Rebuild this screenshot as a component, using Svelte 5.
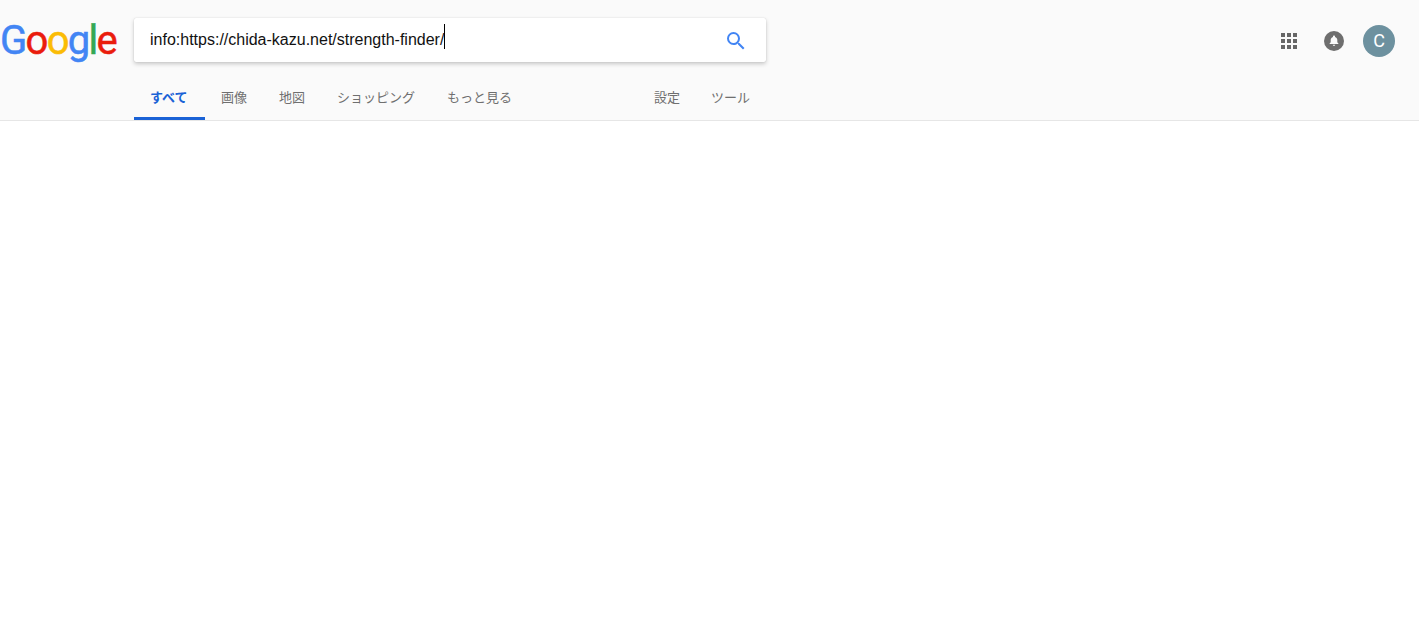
<script>
  const logo = [['G', '#4285f4'], ['o', '#ea1c0c'], ['o', '#fbbc05'], ['g', '#4285f4'], ['l', '#34a853'], ['e', '#ea1c0c']];
  const left = ['画像', '地図', 'ショッピング', 'もっと見る'];
  const right = ['設定', 'ツール'];
  const cells = Array.from({ length: 9 });
</script>

<div class="page">
  <header class="header">
    <div class="top">
      <div class="logo" aria-label="Google">
        {#each logo as [ch, color]}
          <span style="color:{color}">{ch}</span>
        {/each}
      </div>
      <div class="search">
        <div class="query">info:https://chida-kazu.net/strength-finder/<i class="caret"></i></div>
        <svg class="mag" width="24" height="24" viewBox="0 0 24 24">
          <path fill="#4285f4" d="M15.5 14h-.79l-.28-.27A6.47 6.47 0 0 0 16 9.5 6.5 6.5 0 1 0 9.5 16c1.61 0 3.09-.59 4.23-1.57l.27.28v.79l5 4.99L20.49 19l-4.99-5zm-6 0C7.01 14 5 11.99 5 9.5S7.01 5 9.5 5 14 7.01 14 9.5 11.99 14 9.5 14z"/>
        </svg>
      </div>
      <div class="tools">
        <div class="apps">
          {#each cells as _}<b></b>{/each}
        </div>
        <svg class="bell" width="20" height="20" viewBox="0 0 20 20">
          <circle cx="10" cy="10" r="10" fill="#6e6e6e"/>
          <path fill="#fafafa" d="M10 4.6c-.6 0-1 .4-1 1v.3C7.5 6.3 6.7 7.5 6.7 9v2.3l-1.1 1.2v.6h8.8v-.6l-1.1-1.2V9c0-1.5-.8-2.7-2.3-3.1v-.3c0-.6-.4-1-1-1zM8.8 13.8c0 .7.5 1.2 1.2 1.2s1.2-.5 1.2-1.2H8.8z"/>
        </svg>
        <div class="avatar">C</div>
      </div>
    </div>
    <nav class="tabs">
      <div class="group">
        <span class="tab active">すべて</span>
        {#each left as t}<span class="tab">{t}</span>{/each}
      </div>
      <div class="group settings">
        {#each right as t}<span class="tab">{t}</span>{/each}
      </div>
    </nav>
  </header>
</div>

<style>
  :global(body) {
    margin: 0;
    background: #fff;
  }
  .page {
    height: 633px;
    overflow: hidden;
    font-family: "Liberation Sans", "Noto Sans CJK JP", sans-serif;
  }
  .header {
    height: 120px;
    background: #fafafa;
    border-bottom: 1px solid #e6e6e6;
  }
  .top {
    display: flex;
    align-items: flex-start;
    height: 73px;
    padding-top: 18px;
    box-sizing: border-box;
  }
  .logo {
    width: 134px;
    flex: none;
    height: 44px;
    padding-top: 2px;
    font-family: Roboto, sans-serif;
    font-size: 40px;
    line-height: 41px;
    letter-spacing: -1.7px;
    font-weight: 400;
    -webkit-text-stroke: 0.5px currentColor;
    white-space: nowrap;
    box-sizing: border-box;
  }
  .search {
    width: 632px;
    height: 44px;
    flex: none;
    background: #fff;
    border-radius: 2px;
    box-shadow: 0 2px 4px rgba(0, 0, 0, 0.2), 0 0 1px rgba(0, 0, 0, 0.2);
    display: flex;
    align-items: center;
    justify-content: space-between;
    padding: 0 18px 0 16px;
    box-sizing: border-box;
  }
  .query {
    font-size: 16px;
    color: #111;
    line-height: 24px;
    display: flex;
    align-items: center;
    white-space: nowrap;
  }
  .caret {
    display: block;
    width: 1px;
    height: 25px;
    background: #000;
    margin-top: -7px;
  }
  .mag {
    flex: none;
    margin-top: 1px;
  }
  .tools {
    margin-left: auto;
    display: flex;
    align-items: center;
    padding-right: 24px;
    height: 46px;
  }
  .apps {
    display: grid;
    grid-template-columns: repeat(3, 4px);
    grid-auto-rows: 4px;
    gap: 2px;
    margin-right: 27px;
  }
  .apps b {
    background: #666;
    display: block;
  }
  .bell {
    margin-right: 19px;
  }
  .avatar {
    width: 32px;
    height: 32px;
    border-radius: 50%;
    background: #6d919f;
    color: #fff;
    font-family: Roboto, sans-serif;
    font-size: 18px;
    line-height: 32px;
    text-align: center;
  }
  .tabs {
    display: flex;
    height: 47px;
    padding-left: 134px;
  }
  .group {
    display: flex;
  }
  .settings {
    margin-left: 110px;
  }
  .tab {
    font-size: 13px;
    color: #6f6f6f;
    padding: 17px 16px 0;
    line-height: 16px;
    box-sizing: border-box;
    height: 47px;
    white-space: nowrap;
    border-bottom: 3px solid transparent;
  }
  .settings .tab:last-child {
    padding-left: 15px;
  }
  .tab.active {
    color: #1a62d6;
    font-weight: 700;
    border-bottom-color: #1a62d6;
    width: 71px;
  }
</style>
